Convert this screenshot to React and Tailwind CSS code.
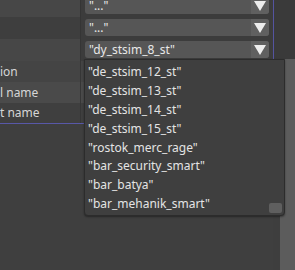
import React from "react";

const font = { fontFamily: '"Noto Sans", "Open Sans", sans-serif' };

function Drop({ text }) {
  return (
    <div className="flex h-[17px] w-[184px] items-center rounded-[3px] bg-[#565656] ml-[4px]">
      <span className="flex-1 pl-[4px] text-[12px] leading-none text-[#e8e8e8] whitespace-nowrap">{text}</span>
      <div className="flex h-[17px] w-[18px] items-center justify-center rounded-r-[3px] bg-[#606060]">
        <svg width="12" height="10" viewBox="0 0 12 10"><path d="M0 0H12L6 10Z" fill="#ededed" /></svg>
      </div>
    </div>
  );
}

function TopRow({ text, bg, first }) {
  return (
    <div className={`flex h-[22px] ${first ? "-mt-[5px]" : ""}`}>
      <div className={`w-[80px] ${bg}`} />
      <div className="flex-1 pt-[2px] pb-[3px] bg-[#3c3c3c] border-l border-[#353535]">
        <Drop text={text} />
      </div>
    </div>
  );
}

function LabelRow({ text, bg, h }) {
  return (
    <div className={`flex ${h} ${bg}`}>
      <div className="w-[80px] flex items-center overflow-hidden text-[12px] text-[#d6d6d6] whitespace-nowrap">{text}</div>
      <div className="flex-1 border-l border-[#363636]" />
    </div>
  );
}

const items = [
  '"de_stsim_12_st"',
  '"de_stsim_13_st"',
  '"de_stsim_14_st"',
  '"de_stsim_15_st"',
  '"rostok_merc_rage"',
  '"bar_security_smart"',
  '"bar_batya"',
  '"bar_mehanik_smart"',
];

export default function App() {
  return (
    <div className="relative h-[270px] w-[295px] overflow-hidden bg-[#3e3e3e]" style={font}>
      <div className="flex h-full">
        <div className="flex w-[273px] flex-col">
          <TopRow text={'"..."'} bg="bg-[#474747]" first />
          <TopRow text={'"..."'} bg="bg-[#3e3e3e]" />
          <TopRow text={'"dy_stsim_8_st"'} bg="bg-[#474747]" />
          <LabelRow text="ion" bg="bg-[#444444]" h="h-[21px]" />
          <LabelRow text="l name" bg="bg-[#4a4a4a]" h="h-[21px]" />
          <LabelRow text="t name" bg="bg-[#3f3f3f]" h="h-[20px]" />
          <div className="h-px bg-[#5858a8]" />
          <div className="flex-1 bg-[#3f3f3f]" />
        </div>
        <div className="w-px h-[59px] bg-[#5454a0]" />
        <div className="flex flex-col w-[21px]">
          <div className="h-[59px] bg-[#3a3a3a]" />
          <div className="flex flex-1">
            <div className="w-[6px] bg-[#3e3e3e]" />
            <div className="flex-1 bg-[#5c5c5c]" />
          </div>
        </div>
      </div>
      <div className="absolute left-[84px] top-[59px] h-[157px] w-[201px] rounded-b-[4px] border border-[#2c2c2c] bg-[#3f3f3f] shadow-[0_1px_2px_rgba(0,0,0,0.4)]">
        <div className="flex flex-col pt-[3px] pl-[3px]">
          {items.map((t) => (
            <div key={t} className="flex h-[18.8px] items-center text-[12px] text-[#e4e4e4] whitespace-nowrap">{t}</div>
          ))}
        </div>
        <div className="absolute right-[2px] bottom-[2px] h-[10px] w-[13px] rounded-[2px] bg-[#5f5f5f]" />
      </div>
    </div>
  );
}
